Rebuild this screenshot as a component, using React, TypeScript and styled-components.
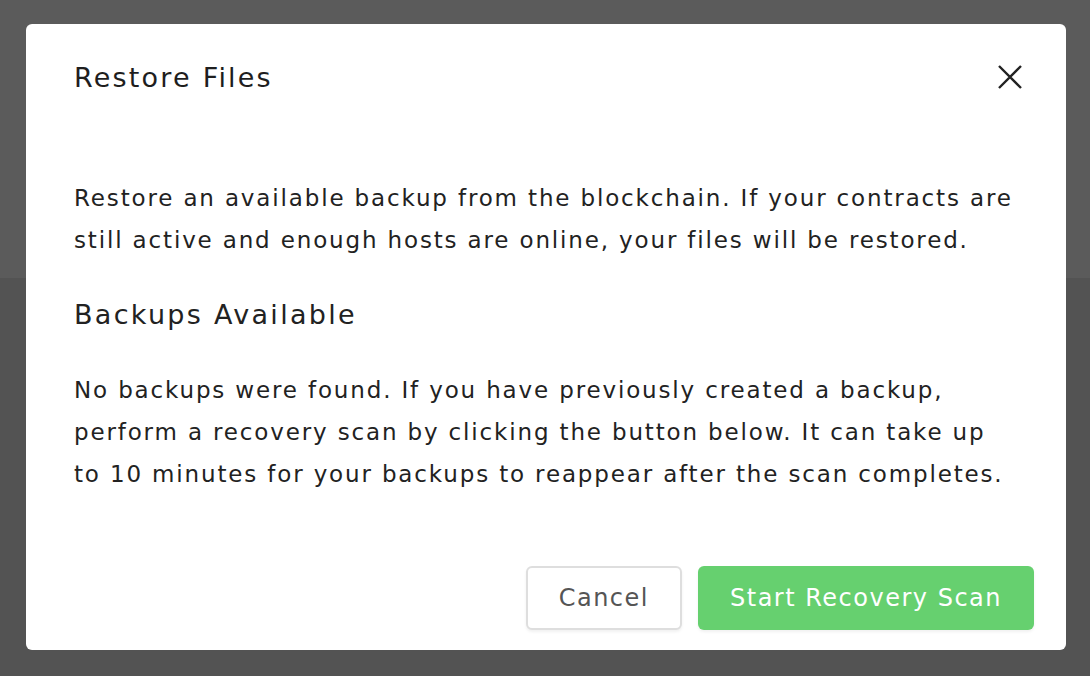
import React, { FC } from 'react'
import styled, { createGlobalStyle } from 'styled-components'

const GlobalStyle = createGlobalStyle`
  html, body {
    margin: 0;
    padding: 0;
    height: 100%;
  }
  body {
    font-family: "DejaVu Sans", Inter, sans-serif;
    background: linear-gradient(#5b5b5b 0, #5b5b5b 278px, #535353 278px, #535353 100%);
    color: #222;
  }
`

const Backdrop = styled.div`
  position: fixed;
  inset: 0;
  display: flex;
  align-items: flex-start;
  justify-content: flex-start;
  padding: 24px 0 0 26px;
`

const Modal = styled.div`
  width: 1040px;
  height: 626px;
  box-sizing: border-box;
  background: #fff;
  border-radius: 6px;
  display: flex;
  flex-direction: column;
  padding: 32px 32px 20px 48px;
`

const Header = styled.div`
  display: flex;
  align-items: center;
  justify-content: space-between;
  height: 42px;
`

const Title = styled.h2`
  margin: 0;
  font-size: 27px;
  font-weight: 400;
  letter-spacing: 2.2px;
  color: #1e1e1e;
`

const CloseButton = styled.button`
  border: none;
  background: none;
  padding: 0;
  margin-right: 12px;
  width: 24px;
  height: 24px;
  cursor: pointer;
  display: flex;
`

const Body = styled.div`
  margin-top: 79px;
  width: 940px;
  flex: 1;
`

const Text = styled.p`
  margin: 0;
  font-size: 23px;
  line-height: 42px;
  letter-spacing: 1.85px;
  color: #222;
`

const SubTitle = styled.h3`
  margin: 36px 0;
  font-size: 27px;
  line-height: 36px;
  font-weight: 400;
  letter-spacing: 2.3px;
  color: #222;
`

const Footer = styled.div`
  display: flex;
  justify-content: flex-end;
  gap: 16px;
`

const Button = styled.button<{ $primary?: boolean }>`
  height: 64px;
  padding: 0 ${p => (p.$primary ? 32 : 31)}px;
  border-radius: 6px;
  font-family: inherit;
  font-size: 24px;
  letter-spacing: 1.5px;
  cursor: pointer;
  border: ${p => (p.$primary ? 'none' : '2px solid #dedede')};
  background: ${p => (p.$primary ? '#66d06f' : '#fff')};
  color: ${p => (p.$primary ? '#fff' : '#555')};
  box-shadow: 0 2px 3px rgba(0, 0, 0, 0.06);
`

const App: FC = () => {
  return (
    <>
      <GlobalStyle />
      <Backdrop>
        <Modal>
          <Header>
            <Title>Restore Files</Title>
            <CloseButton aria-label="close">
              <svg width="24" height="24" viewBox="0 0 24 24">
                <path d="M1 1L23 23M23 1L1 23" stroke="#222" strokeWidth="2.4" />
              </svg>
            </CloseButton>
          </Header>
          <Body>
            <Text>
              Restore an available backup from the blockchain. If your contracts are still active and
              enough hosts are online, your files will be restored.
            </Text>
            <SubTitle>Backups Available</SubTitle>
            <Text>
              No backups were found. If you have previously created a backup, perform a recovery scan
              by clicking the button below. It can take up to 10 minutes for your backups to reappear
              after the scan completes.
            </Text>
          </Body>
          <Footer>
            <Button>Cancel</Button>
            <Button $primary>Start Recovery Scan</Button>
          </Footer>
        </Modal>
      </Backdrop>
    </>
  )
}

export default App
